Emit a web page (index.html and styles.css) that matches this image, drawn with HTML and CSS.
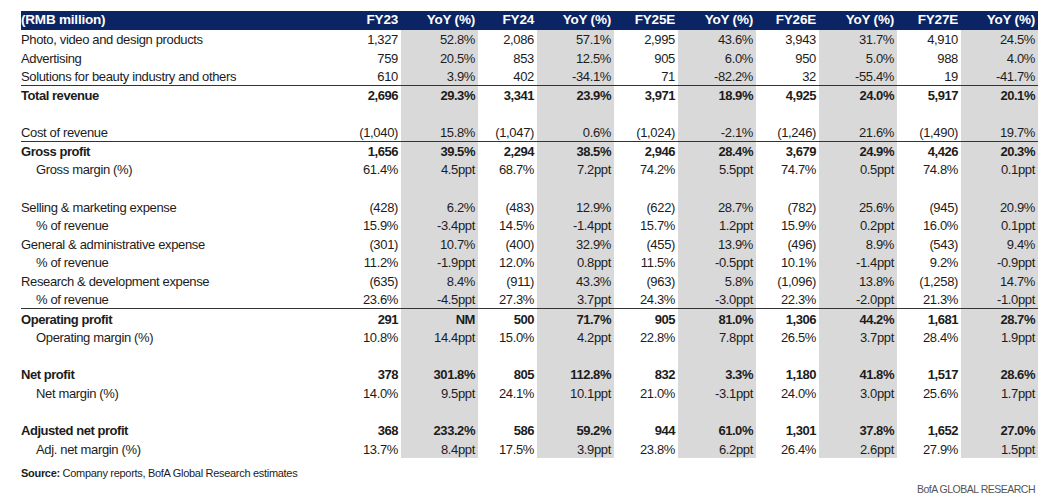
FILE: index.html
```html
<!DOCTYPE html>
<html>
<head>
<meta charset="utf-8">
<link rel="stylesheet" href="styles.css">
</head>
<body>
<div class="page">
<table class="fin">
<colgroup>
<col class="c-label"><col class="c-fy23"><col class="c-yoy"><col class="c-fy24"><col class="c-yoy"><col class="c-fy"><col class="c-yoy2"><col class="c-fy26"><col class="c-yoy2"><col class="c-fy"><col class="c-yoy">
</colgroup>
<thead>
<tr class="head"><th class="label">(RMB million)</th><th>FY23</th><th>YoY (%)</th><th>FY24</th><th>YoY (%)</th><th>FY25E</th><th>YoY (%)</th><th>FY26E</th><th>YoY (%)</th><th>FY27E</th><th>YoY (%)</th></tr>
</thead>
<tbody>
<tr><td class="label">Photo, video and design products</td><td>1,327</td><td class="g">52.8%</td><td>2,086</td><td class="g">57.1%</td><td>2,995</td><td class="g">43.6%</td><td>3,943</td><td class="g">31.7%</td><td>4,910</td><td class="g">24.5%</td></tr>
<tr><td class="label">Advertising</td><td>759</td><td class="g">20.5%</td><td>853</td><td class="g">12.5%</td><td>905</td><td class="g">6.0%</td><td>950</td><td class="g">5.0%</td><td>988</td><td class="g">4.0%</td></tr>
<tr class="rule"><td class="label">Solutions for beauty industry and others</td><td>610</td><td class="g">3.9%</td><td>402</td><td class="g">-34.1%</td><td>71</td><td class="g">-82.2%</td><td>32</td><td class="g">-55.4%</td><td>19</td><td class="g">-41.7%</td></tr>
<tr class="bold"><td class="label">Total revenue</td><td>2,696</td><td class="g">29.3%</td><td>3,341</td><td class="g">23.9%</td><td>3,971</td><td class="g">18.9%</td><td>4,925</td><td class="g">24.0%</td><td>5,917</td><td class="g">20.1%</td></tr>
<tr><td class="label"></td><td></td><td class="g"></td><td></td><td class="g"></td><td></td><td class="g"></td><td></td><td class="g"></td><td></td><td class="g"></td></tr>
<tr class="rule"><td class="label">Cost of revenue</td><td>(1,040)</td><td class="g">15.8%</td><td>(1,047)</td><td class="g">0.6%</td><td>(1,024)</td><td class="g">-2.1%</td><td>(1,246)</td><td class="g">21.6%</td><td>(1,490)</td><td class="g">19.7%</td></tr>
<tr class="bold"><td class="label">Gross profit</td><td>1,656</td><td class="g">39.5%</td><td>2,294</td><td class="g">38.5%</td><td>2,946</td><td class="g">28.4%</td><td>3,679</td><td class="g">24.9%</td><td>4,426</td><td class="g">20.3%</td></tr>
<tr><td class="label sub">Gross margin (%)</td><td>61.4%</td><td class="g">4.5ppt</td><td>68.7%</td><td class="g">7.2ppt</td><td>74.2%</td><td class="g">5.5ppt</td><td>74.7%</td><td class="g">0.5ppt</td><td>74.8%</td><td class="g">0.1ppt</td></tr>
<tr><td class="label"></td><td></td><td class="g"></td><td></td><td class="g"></td><td></td><td class="g"></td><td></td><td class="g"></td><td></td><td class="g"></td></tr>
<tr><td class="label">Selling &amp; marketing expense</td><td>(428)</td><td class="g">6.2%</td><td>(483)</td><td class="g">12.9%</td><td>(622)</td><td class="g">28.7%</td><td>(782)</td><td class="g">25.6%</td><td>(945)</td><td class="g">20.9%</td></tr>
<tr><td class="label sub">% of revenue</td><td>15.9%</td><td class="g">-3.4ppt</td><td>14.5%</td><td class="g">-1.4ppt</td><td>15.7%</td><td class="g">1.2ppt</td><td>15.9%</td><td class="g">0.2ppt</td><td>16.0%</td><td class="g">0.1ppt</td></tr>
<tr><td class="label">General &amp; administrative expense</td><td>(301)</td><td class="g">10.7%</td><td>(400)</td><td class="g">32.9%</td><td>(455)</td><td class="g">13.9%</td><td>(496)</td><td class="g">8.9%</td><td>(543)</td><td class="g">9.4%</td></tr>
<tr><td class="label sub">% of revenue</td><td>11.2%</td><td class="g">-1.9ppt</td><td>12.0%</td><td class="g">0.8ppt</td><td>11.5%</td><td class="g">-0.5ppt</td><td>10.1%</td><td class="g">-1.4ppt</td><td>9.2%</td><td class="g">-0.9ppt</td></tr>
<tr><td class="label">Research &amp; development expense</td><td>(635)</td><td class="g">8.4%</td><td>(911)</td><td class="g">43.3%</td><td>(963)</td><td class="g">5.8%</td><td>(1,096)</td><td class="g">13.8%</td><td>(1,258)</td><td class="g">14.7%</td></tr>
<tr class="rule"><td class="label sub">% of revenue</td><td>23.6%</td><td class="g">-4.5ppt</td><td>27.3%</td><td class="g">3.7ppt</td><td>24.3%</td><td class="g">-3.0ppt</td><td>22.3%</td><td class="g">-2.0ppt</td><td>21.3%</td><td class="g">-1.0ppt</td></tr>
<tr class="bold"><td class="label">Operating profit</td><td>291</td><td class="g">NM</td><td>500</td><td class="g">71.7%</td><td>905</td><td class="g">81.0%</td><td>1,306</td><td class="g">44.2%</td><td>1,681</td><td class="g">28.7%</td></tr>
<tr><td class="label sub">Operating margin (%)</td><td>10.8%</td><td class="g">14.4ppt</td><td>15.0%</td><td class="g">4.2ppt</td><td>22.8%</td><td class="g">7.8ppt</td><td>26.5%</td><td class="g">3.7ppt</td><td>28.4%</td><td class="g">1.9ppt</td></tr>
<tr><td class="label"></td><td></td><td class="g"></td><td></td><td class="g"></td><td></td><td class="g"></td><td></td><td class="g"></td><td></td><td class="g"></td></tr>
<tr class="bold"><td class="label">Net profit</td><td>378</td><td class="g">301.8%</td><td>805</td><td class="g">112.8%</td><td>832</td><td class="g">3.3%</td><td>1,180</td><td class="g">41.8%</td><td>1,517</td><td class="g">28.6%</td></tr>
<tr><td class="label sub">Net margin (%)</td><td>14.0%</td><td class="g">9.5ppt</td><td>24.1%</td><td class="g">10.1ppt</td><td>21.0%</td><td class="g">-3.1ppt</td><td>24.0%</td><td class="g">3.0ppt</td><td>25.6%</td><td class="g">1.7ppt</td></tr>
<tr><td class="label"></td><td></td><td class="g"></td><td></td><td class="g"></td><td></td><td class="g"></td><td></td><td class="g"></td><td></td><td class="g"></td></tr>
<tr class="bold"><td class="label">Adjusted net profit</td><td>368</td><td class="g">233.2%</td><td>586</td><td class="g">59.2%</td><td>944</td><td class="g">61.0%</td><td>1,301</td><td class="g">37.8%</td><td>1,652</td><td class="g">27.0%</td></tr>
<tr><td class="label sub">Adj. net margin (%)</td><td>13.7%</td><td class="g">8.4ppt</td><td>17.5%</td><td class="g">3.9ppt</td><td>23.8%</td><td class="g">6.2ppt</td><td>26.4%</td><td class="g">2.6ppt</td><td>27.9%</td><td class="g">1.5ppt</td></tr>
</tbody>
</table>
<p class="source"><b>Source:</b> Company reports, BofA Global Research estimates</p>
<p class="brand">BofA GLOBAL RESEARCH</p>
</div>
</body>
</html>
```

FILE: styles.css
```css
html, body {
  margin: 0;
  padding: 0;
  background: #ffffff;
}
.page {
  padding: 11px 0 0 21px;
  width: 1017px;
  font-family: "Liberation Sans", Arial, sans-serif;
  color: #1c1c1c;
}
.fin {
  border-collapse: collapse;
  table-layout: fixed;
  width: 1017px;
  font-size: 13px;
  letter-spacing: -0.35px;
}
.c-label { width: 316px; }
.c-fy23 { width: 64px; }
.c-yoy { width: 77px; }
.c-fy24 { width: 59px; }
.c-fy { width: 64px; }
.c-yoy2 { width: 78px; }
.c-fy26 { width: 63px; }
.fin th, .fin td {
  padding: 0 3px 0 0;
  height: 18.63px;
  line-height: 18px;
  text-align: right;
  white-space: nowrap;
  vertical-align: middle;
  box-sizing: border-box;
}
.fin td {
  padding-top: 1px;
  line-height: 17px;
}
.fin th.label, .fin td.label {
  text-align: left;
  padding-left: 0;
}
.fin td.sub {
  padding-left: 15px;
}
.head th {
  background: #0b2463;
  color: #ffffff;
  font-weight: bold;
  font-size: 13.5px;
  letter-spacing: -0.2px;
  height: 18.6px;
}
.fin td.g {
  background: #d9d9d9;
}
.bold td {
  font-weight: bold;
  letter-spacing: -0.45px;
}
.rule td {
  border-bottom: 1px solid #333333;
}
.source {
  margin: 8px 0 0 0;
  font-size: 11px;
  letter-spacing: -0.3px;
  line-height: 14px;
  color: #1c1c1c;
}
.source b {
  font-weight: bold;
}
.brand {
  margin: 2px 0 0 0;
  text-align: right;
  padding-right: 3px;
  font-size: 10.5px;
  letter-spacing: -0.5px;
  line-height: 14px;
  color: #555555;
}
```
